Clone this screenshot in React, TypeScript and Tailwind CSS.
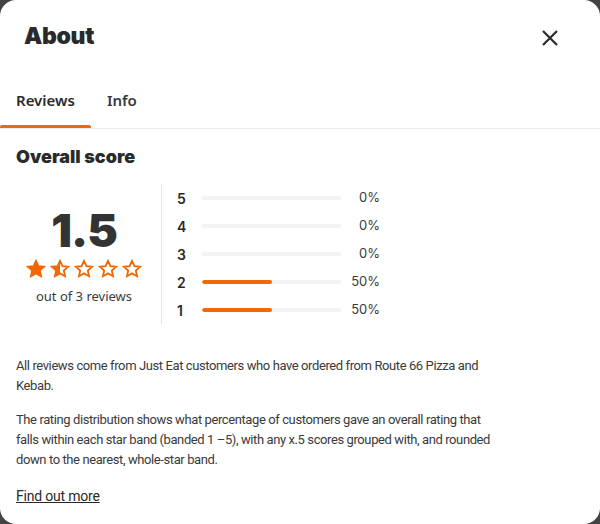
import React from "react";

const ORANGE = "#f36805";

function Star({ fill }: { fill: "full" | "half" | "none" }) {
  const id = React.useId().replace(/:/g, "");
  const pts = "12,2.2 14.9,8.6 21.8,9.3 16.6,13.9 18.1,20.7 12,17.2 5.9,20.7 7.4,13.9 2.2,9.3 9.1,8.6";
  return (
    <svg width="20" height="20" viewBox="0 0 24 24" className="block">
      <defs>
        <linearGradient id={id} x1="0" x2="1" y1="0" y2="0">
          <stop offset="50%" stopColor={ORANGE} />
          <stop offset="50%" stopColor="#ffffff" />
        </linearGradient>
      </defs>
      <polygon
        points={pts}
        fill={fill === "full" ? ORANGE : fill === "half" ? `url(#${id})` : "#ffffff"}
        stroke={ORANGE}
        strokeWidth="2.2"
        strokeLinejoin="miter"
      />
    </svg>
  );
}

const rows = [
  { n: 5, p: 0 },
  { n: 4, p: 0 },
  { n: 3, p: 0 },
  { n: 2, p: 50 },
  { n: 1, p: 50 },
];

const body = { fontFamily: 'Roboto, "Noto Sans", sans-serif' };

export default function App() {
  return (
    <div className="w-[600px] h-[524px] bg-[#444444]">
      <div
        className="w-[600px] h-[524px] bg-white rounded-[16px] overflow-hidden flex flex-col text-[#2b2b2b]"
        style={{ fontFamily: '"Noto Sans", sans-serif' }}
      >
        <div className="h-[72px] flex items-center justify-between pl-6 pr-[40px] shrink-0">
          <h1 className="text-[23px] font-black tracking-[-0.3px] text-[#2a2a2a]" style={{ fontFamily: 'Inter, sans-serif' }}>
            About
          </h1>
          <svg width="20" height="20" viewBox="0 0 20 20" className="mt-[4px]">
            <path d="M3 3 L17 17 M17 3 L3 17" stroke="#2a2a2a" strokeWidth="2.2" strokeLinecap="butt" />
          </svg>
        </div>

        <div className="flex border-b border-[#ececec] shrink-0">
          <div className="relative h-[56px] px-4 flex items-center text-[15px] font-semibold text-[#2a2a2a]">
            Reviews
            <div className="absolute left-0 right-0 bottom-0 h-[3px] bg-[#f36805] rounded-t-[2px]" />
          </div>
          <div className="h-[56px] px-4 flex items-center text-[15px] font-semibold text-[#3a3a3a]">Info</div>
        </div>

        <div className="px-4 pt-4">
          <h2 className="text-[18px] leading-[24px] font-black text-[#2a2a2a]" style={{ fontFamily: 'Inter, sans-serif' }}>
            Overall score
          </h2>

          <div className="flex mt-[15px] h-[140px]">
            <div className="w-[136px] flex flex-col items-center justify-center mr-[9px] pt-[2px]">
              <div className="text-[46px] leading-[48px] font-black text-[#333333] tracking-[-1px]" style={{ fontFamily: 'Inter, sans-serif' }}>
                1.5
              </div>
              <div className="flex gap-[4px] mt-[5px]">
                <Star fill="full" />
                <Star fill="half" />
                <Star fill="none" />
                <Star fill="none" />
                <Star fill="none" />
              </div>
              <div className="text-[13px] leading-[18px] mt-[8px] text-[#3a3a3a]">out of 3 reviews</div>
            </div>
            <div className="border-l border-[#e6e6e6] pl-[15px] flex flex-col">
              {rows.map((r) => (
                <div key={r.n} className="h-[28px] flex items-center">
                  <div className="w-[25px] text-[14px] font-semibold text-[#2a2a2a]" style={{ fontFamily: 'Inter, sans-serif' }}>
                    {r.n}
                  </div>
                  <div className="w-[139px] h-[4px] rounded-full bg-[#f5f3f1] overflow-hidden">
                    <div className="h-full rounded-full bg-[#f36805]" style={{ width: `${r.p}%` }} />
                  </div>
                  <div className="w-[39px] text-right text-[13px] text-[#3a3a3a]" style={{ fontFamily: 'Inter, sans-serif' }}>
                    {r.p}%
                  </div>
                </div>
              ))}
            </div>
          </div>

          <div className="w-[476px]" style={body}>
            <p className="mt-[32px] text-[13px] leading-[20px] tracking-[-0.4px] text-[#3a3a3a]">
              All reviews come from Just Eat customers who have ordered from Route 66 Pizza and Kebab.
            </p>
            <p className="mt-[14px] text-[13px] leading-[20px] tracking-[-0.4px] text-[#3a3a3a]">
              The rating distribution shows what percentage of customers gave an overall rating that falls within each star
              band (banded 1 –5), with any x.5 scores grouped with, and rounded down to the nearest, whole-star band.
            </p>
            <a className="block mt-[14px] text-[14px] leading-[24px] tracking-[-0.2px] underline text-[#2a2a2a]">Find out more</a>
          </div>
        </div>
      </div>
    </div>
  );
}
